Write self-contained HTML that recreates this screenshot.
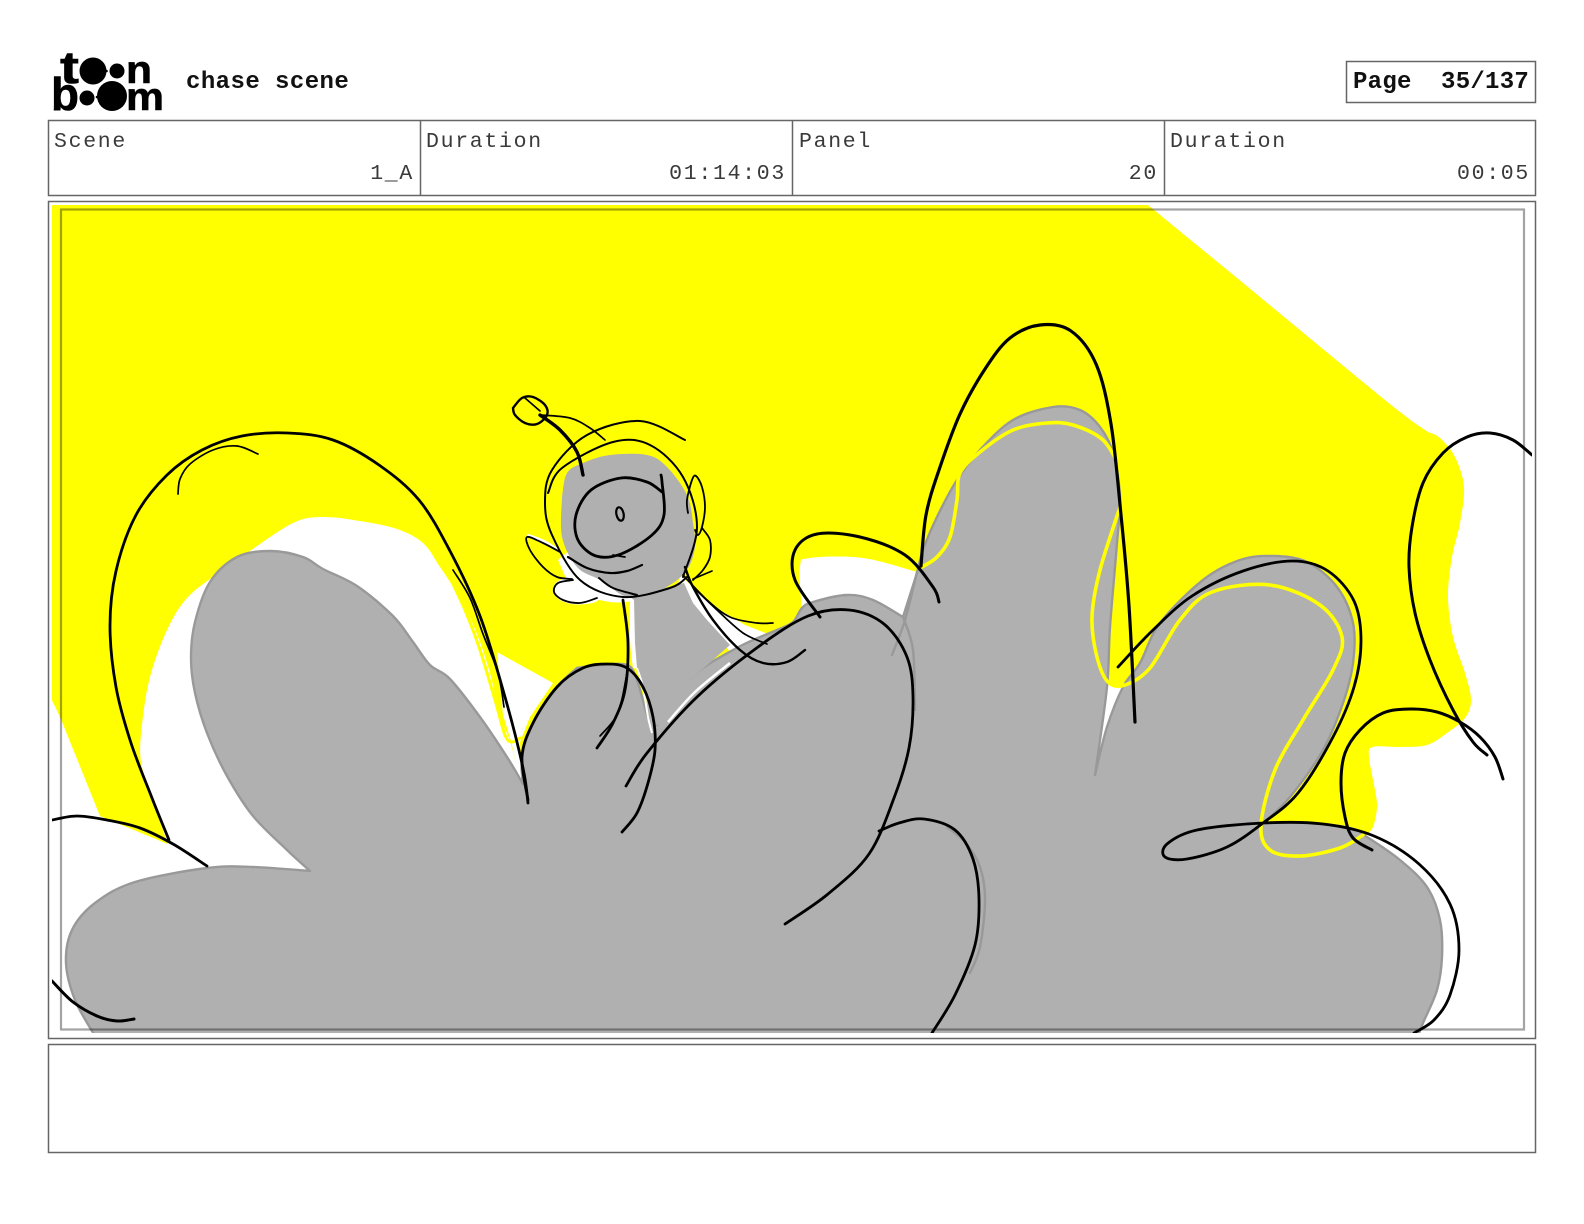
<!DOCTYPE html>
<html lang="en">
<head>
<meta charset="utf-8">
<title>chase scene</title>
<style>
html,body{margin:0;padding:0;background:#fff;width:1584px;height:1224px;overflow:hidden}
svg{display:block}
.lbl{font-family:"Liberation Mono",monospace;font-size:21.5px;letter-spacing:1.7px;fill:#3a3a3a}
.hd{font-family:"Liberation Mono",monospace;font-size:24px;font-weight:bold;letter-spacing:.2px;fill:#111}
.box{fill:none;stroke:#666;stroke-width:1.5}
.k{fill:none;stroke:#000;stroke-width:2.8;stroke-linecap:round;stroke-linejoin:round}
.t{fill:none;stroke:#000;stroke-width:1.7;stroke-linecap:round;stroke-linejoin:round}
.y{fill:none;stroke:#ff0;stroke-width:3.6;stroke-linecap:round;stroke-linejoin:round}
.e{fill:none;stroke:#999;stroke-width:2.4;stroke-linecap:round;stroke-linejoin:round}
.w{fill:#fff;stroke:none}
.lg{font-family:"Liberation Sans",sans-serif;font-weight:bold;fill:#000;stroke:#000;stroke-width:.6}
</style>
</head>
<body>
<svg width="1584" height="1224" viewBox="0 0 1584 1224" xmlns="http://www.w3.org/2000/svg">
<defs><clipPath id="c"><rect x="52" y="205" width="1480" height="828"/></clipPath></defs>

<!-- logo -->
<text class="lg" x="60" y="83" font-size="45" textLength="19" lengthAdjust="spacingAndGlyphs">t</text>
<circle cx="93" cy="71" r="13.5"/>
<circle cx="117" cy="71" r="7.5"/>
<circle cx="106.5" cy="71" r="1.3"/>
<text class="lg" x="126" y="83" font-size="39" textLength="26" lengthAdjust="spacingAndGlyphs">n</text>
<text class="lg" x="51" y="110" font-size="46" textLength="28" lengthAdjust="spacingAndGlyphs">b</text>
<circle cx="87" cy="98" r="7.5"/>
<circle cx="112" cy="96" r="15"/>
<circle cx="97" cy="97" r="1.3"/>
<text class="lg" x="126" y="110" font-size="39" textLength="38" lengthAdjust="spacingAndGlyphs">m</text>

<text class="hd" x="186" y="88" textLength="163" lengthAdjust="spacing">chase scene</text>
<rect class="box" x="1346.5" y="61.5" width="189" height="41"/>
<text class="hd" x="1353" y="88" textLength="176" lengthAdjust="spacing" xml:space="preserve">Page  35/137</text>

<!-- info table -->
<rect class="box" x="48.5" y="120.5" width="1487" height="75"/>
<path class="box" d="M420.5 120V195M792.5 120V195M1164.5 120V195"/>
<text class="lbl" x="54" y="147">Scene</text>
<text class="lbl" x="426" y="147">Duration</text>
<text class="lbl" x="799" y="147">Panel</text>
<text class="lbl" x="1170" y="147">Duration</text>
<text class="lbl" x="414" y="179" text-anchor="end">1_A</text>
<text class="lbl" x="786" y="179" text-anchor="end">01:14:03</text>
<text class="lbl" x="1158" y="179" text-anchor="end">20</text>
<text class="lbl" x="1530" y="179" text-anchor="end">00:05</text>

<rect class="box" x="48.5" y="201.5" width="1487" height="837"/>
<rect class="box" x="48.5" y="1044.5" width="1487" height="108"/>

<g clip-path="url(#c)">
<!-- yellow fill -->
<path class="s" fill="#ff0" d="M50 205 50 205 1148 205 1148 205 1237 278 1385 400 1428 432 1428 432 1440 438 1455 457 1464 487 1460 523 1452 557 1448 597 1453 637 1465 673 1471 700 1465 718 1447 733 1427 745 1400 747 1373 747 1369 757 1375 790 1377 807 1373 827 1365 836 1365 836 1250 870 600 820 170 845 170 845 100 816 100 816 73 749 60 717 50 697 50 697 Z"/>

<!-- white zones -->
<path class="s w" d="M165 836 165 836 153 800 141 762 142 725 150 677 167 630 187 598 217 574 247 553 293 523 323 517 360 521 397 529 423 543 440 567 460 598 477 634 490 673 500 717 510 741 523 790 523 790 480 810 310 880 170 850 170 850 Z"/>
<path class="w" d="M497 652 553 683 530 717 520 742 522 790 511 741 503 715Z"/>
<path class="s w" d="M802 612 802 612 800 567 810 558 863 558 917 572 917 572 903 625 903 625 Z"/>
<path class="w" d="M1105 685 1126 685 1095 778Z"/>
<path class="s w" d="M558 560 558 560 575 590 610 602 640 600 640 600 600 575 570 550 570 550 Z"/>
<path class="w" d="M680 575 697 591 720 610 745 625 768 634 733 655 707 625 690 605 678 585Z"/>
<path class="s" fill="none" stroke="#fff" stroke-width="6" d="M633 597 633 640 636 668"/>
<path class="s" fill="#fff" stroke="#fff" stroke-width="3" d="M554 592 558 583 573 580 597 598 580 603 563 600 554 592"/>
<path class="s" fill="none" stroke="#fff" stroke-width="3" d="M527 535 543 541 558 550"/>

<!-- yellow strip by the tail -->
<path class="s y" style="stroke-width:3" d="M447 572 465 610 480 650 495 700 505 735 512 742 520 738"/>

<!-- grey mass -->
<path class="s" fill="#b0b0b0" stroke="#999" stroke-width="2.4" stroke-linejoin="round" d="M95 1036 95 1036 75 1000 66 963 72 930 95 903 135 882 207 868 253 867 310 871 310 871 287 850 253 816 227 776 207 733 195 693 191 658 195 622 210 582 237 557 270 551 303 557 323 569 357 586 393 616 413 642 430 665 450 679 480 717 507 757 523 784 523 784 522 757 533 723 557 687 577 668 577 668 600 665 627 665 637 680 648 717 657 725 657 725 673 697 700 670 733 650 753 640 777 630 793 622 802 608 813 602 847 595 873 600 903 617 903 617 917 573 917 573 923 550 937 517 957 480 980 450 1013 420 1053 407 1080 410 1100 427 1113 453 1120 497 1117 543 1110 627 1107 687 1095 775 1095 775 1107 727 1123 687 1140 663 1160 623 1203 580 1240 560 1273 556 1307 562 1337 587 1353 623 1353 663 1343 703 1323 750 1290 797 1263 823 1263 823 1307 823 1350 828 1367 837 1400 860 1427 887 1440 920 1442 957 1437 990 1423 1023 1418 1036 1418 1036 Z"/>

<!-- head + neck grey -->
<path fill="#b0b0b0" d="M630 597 684 583 693 603 707 620 730 645 690 680 660 725 650 725 645 690 637 668 635 643 634 600Z"/>
<path class="s" fill="#b0b0b0" d="M562 497 567 473 583 463 610 455 647 455 667 467 687 495 693 523 695 547 687 570 670 585 650 593 627 597 600 580 577 567 562 537 562 497"/>
<path class="s" fill="none" stroke="#fff" stroke-width="2.5" d="M668 722 695 692 730 663"/>
<path class="s" fill="none" stroke="#fff" stroke-width="2" d="M637 668 643 687 648 717 652 733"/>

<!-- grey second strokes -->
<path class="s e" d="M892 655 905 620 917 572"/>
<path class="s e" d="M903 617 913 650 915 710"/>
<path class="s e" d="M947 827 965 842 980 867 985 900 980 947 970 973"/>

<!-- yellow contour lines -->
<path class="s y" d="M1120 467 1103 440 1073 425 1047 423 1013 430 980 452 960 473 957 500 950 537 937 557 922 567"/>
<path class="s y" d="M1120 507 1100 570 1092 617 1097 657 1108 682 1125 685 1150 668 1180 620 1212 592 1270 585 1320 605 1342 637 1333 670 1303 720 1275 770 1261 825 1270 850 1300 856 1340 848 1363 835"/>
<path class="s y" style="stroke-width:2" d="M540 555 552 562 560 572"/>

<!-- black lines: left -->
<path class="s k" d="M169 840 152 798 131 743 116 687 110 626 116 571 136 515 167 475 202 450 242 436 288 433 333 440 379 465 419 500 450 551 480 616 505 697 523 768 528 803"/>
<path class="s t" d="M258 454 237 446 213 450 190 464 180 479 178 494"/>
<path class="s k" d="M52 820 77 816 107 820 140 828 173 844 207 866"/>
<path class="s k" style="stroke-width:3" d="M52 981 73 1002 97 1016 117 1021 134 1019"/>
<path class="s t" d="M453 570 470 598 483 634 498 673 504 707"/>

<!-- small lobe + neck -->
<path class="s k" d="M528 800 522 757 533 723 557 687 583 668 607 664 627 668 643 687 653 717 655 750 648 783 637 813 622 832"/>
<path class="s k" d="M623 600 628 643 625 690 613 723 597 748"/>
<path class="s t" d="M627 673 618 713 600 736"/>

<!-- big lobe -->
<path class="s k" d="M626 786 647 753 697 697 758 647 808 616 849 610 884 624 907 657 913 697 909 748 894 798 869 854 828 894 785 924"/>
<path class="s k" d="M879 831 899 823 924 819 955 830 973 859 979 899 975 945 955 995 932 1033"/>
<path class="s k" style="stroke-width:3" d="M820 617 795 580 795 550 817 534 860 537 905 555 933 587 939 602"/>

<!-- tall arc -->
<path class="s k" style="stroke-width:3.2" d="M921 566 926 515 939 470 960 414 985 369 1010 338 1040 325 1071 331 1096 364 1111 424 1121 515 1129 606 1135 722"/>

<!-- right lobe + loop -->
<path class="s k" d="M1118 667 1152 631 1192 596 1243 571 1293 561 1328 571 1354 601 1361 641 1354 687 1333 737 1298 793 1263 823 1227 847 1187 859 1165 857 1167 844 1197 830 1263 823 1323 824 1374 836 1419 864 1450 904 1459 950 1450 995 1434 1020 1414 1033"/>
<path class="s k" style="stroke-width:3" d="M1372 850 1353 838 1345 817 1341 783 1345 753 1360 730 1383 713 1410 709 1437 712 1460 722 1480 737 1495 757 1503 779"/>
<path class="s k" style="stroke-width:3" d="M1532 455 1513 440 1490 433 1467 437 1443 453 1423 483 1412 527 1409 567 1415 613 1430 660 1453 710 1473 742 1487 755"/>

<!-- character head -->
<path class="s k" style="stroke-width:2.4" d="M513 408 522 398 533 397 545 405 547 415 537 424 525 423 515 415 513 408"/>
<path class="t" d="M525 398 540 411"/>
<path class="s k" style="stroke-width:3.4" d="M540 415 560 430 577 452 583 475"/>
<path class="s t" d="M540 415 570 418 590 428 605 440"/>
<path class="s k" style="stroke-width:2" d="M685 440 640 421 587 435 552 470 545 503 552 535 580 580 623 597 670 588 687 577"/>
<path class="s k" style="stroke-width:2" d="M548 493 562 468 613 442 650 445 683 477 697 527 683 577"/>
<path class="s k" d="M661 475 662 482 664 515 652 535 621 554 596 556 578 540 576 515 591 490 621 478 647 482 662 492"/>
<path class="t" d="M613 555 625 557"/>
<ellipse cx="620" cy="514" rx="3.6" ry="6.8" transform="rotate(-12 620 514)" fill="none" stroke="#000" stroke-width="2.2"/>
<path class="s k" style="stroke-width:2.2" d="M568 557 587 568 610 573 627 571 642 565"/>
<path class="s k" style="stroke-width:2" d="M599 578 613 588 637 595"/>
<path class="s k" style="stroke-width:1.8" d="M688 513 687 500 692 480 696 476 702 487 705 507 702 527 698 535 695 530"/>
<path class="s k" style="stroke-width:1.8" d="M702 528 710 540 710 557 703 570 693 580"/>
<path class="t" d="M712 571 693 579"/>
<path class="s k" style="stroke-width:1.8" d="M560 552 543 543 527 537 530 550 543 567 557 577 572 579"/>
<path class="s k" style="stroke-width:1.8" d="M573 580 558 583 554 592 563 600 580 603 597 598"/>

<!-- hair strands -->
<path class="s k" style="stroke-width:2.4" d="M685 567 693 587 713 620 740 650 763 663 787 662 805 650"/>
<path class="s t" d="M683 575 707 600 730 617 757 623 773 623"/>
<path class="s t" d="M693 587 717 610 743 633 767 644"/>

<!-- inner frame -->
<rect x="61" y="209.5" width="1463" height="820" fill="none" stroke="#000" stroke-opacity=".36" stroke-width="2.2"/>
</g>
</svg>
<script>
document.querySelectorAll('path.s').forEach(function(el){
  var raw=el.getAttribute('d'),n=raw.match(/-?\d+\.?\d*/g).map(Number),p=[],i;
  for(i=0;i<n.length;i+=2)p.push([n[i],n[i+1]]);
  var d='M'+p[0][0]+' '+p[0][1];
  for(i=0;i<p.length-1;i++){
    var a=p[i],b=p[i+1];
    if(a[0]==b[0]&&a[1]==b[1])continue;
    var z=p[i-1]||a,c=p[i+2]||b;
    d+='C'+(a[0]+(b[0]-z[0])/6).toFixed(1)+' '+(a[1]+(b[1]-z[1])/6).toFixed(1)+' '+(b[0]-(c[0]-a[0])/6).toFixed(1)+' '+(b[1]-(c[1]-a[1])/6).toFixed(1)+' '+b[0]+' '+b[1];
  }
  if(/z\s*$/i.test(raw))d+='Z';
  el.setAttribute('d',d);
});
</script>
</body>
</html>
